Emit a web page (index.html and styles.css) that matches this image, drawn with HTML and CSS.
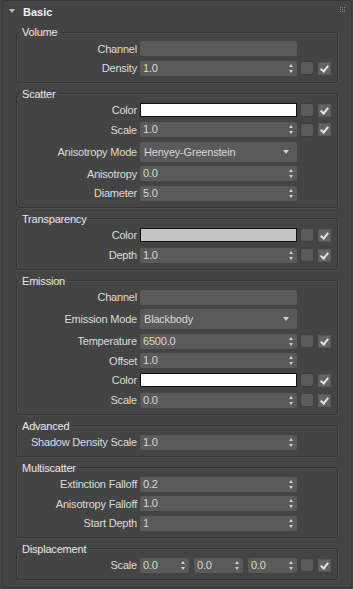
FILE: index.html
```html
<!DOCTYPE html>
<html lang="en">

<head>
    <meta charset="UTF-8">
    <meta name="viewport" content="width=device-width, initial-scale=1.0">
    <title>Basic</title>
    <link rel="stylesheet" href="styles.css">
</head>

<body>
    <div class="rollout">
        <div class="rollout-head">
            <span class="tri"></span>
            <span class="title">Basic</span>
            <svg class="grip" width="6" height="6" viewBox="0 0 6 6">
                <rect x="0" y="0" width="1" height="1" /><rect x="2" y="0" width="1" height="1" /><rect x="4" y="0" width="1" height="1" />
                <rect x="0" y="2" width="1" height="1" /><rect x="2" y="2" width="1" height="1" /><rect x="4" y="2" width="1" height="1" />
                <rect x="0" y="4" width="1" height="1" /><rect x="2" y="4" width="1" height="1" /><rect x="4" y="4" width="1" height="1" />
            </svg>
        </div>

        <div class="rollout-body">
            <fieldset class="group">
                <legend>Volume</legend>
                <div class="row"><label>Channel</label><div class="field"></div></div>
                <div class="row"><label>Density</label><div class="field spin">1.0</div><span class="map"></span><span class="check"></span></div>
            </fieldset>

            <fieldset class="group">
                <legend>Scatter</legend>
                <div class="row"><label>Color</label><div class="swatch white"></div><span class="map"></span><span class="check"></span></div>
                <div class="row"><label>Scale</label><div class="field spin">1.0</div><span class="map"></span><span class="check"></span></div>
                <div class="row tall"><label>Anisotropy Mode</label><div class="field drop">Henyey-Greenstein</div></div>
                <div class="row"><label>Anisotropy</label><div class="field spin">0.0</div></div>
                <div class="row"><label>Diameter</label><div class="field spin">5.0</div></div>
            </fieldset>

            <fieldset class="group">
                <legend>Transparency</legend>
                <div class="row"><label>Color</label><div class="swatch grey"></div><span class="map"></span><span class="check"></span></div>
                <div class="row"><label>Depth</label><div class="field spin">1.0</div><span class="map"></span><span class="check"></span></div>
            </fieldset>

            <fieldset class="group">
                <legend>Emission</legend>
                <div class="row"><label>Channel</label><div class="field"></div></div>
                <div class="row tall"><label>Emission Mode</label><div class="field drop">Blackbody</div></div>
                <div class="row"><label>Temperature</label><div class="field spin">6500.0</div><span class="map"></span><span class="check"></span></div>
                <div class="row"><label>Offset</label><div class="field spin">1.0</div></div>
                <div class="row"><label>Color</label><div class="swatch white"></div><span class="map"></span><span class="check"></span></div>
                <div class="row"><label>Scale</label><div class="field spin">0.0</div><span class="map"></span><span class="check"></span></div>
            </fieldset>

            <fieldset class="group">
                <legend>Advanced</legend>
                <div class="row"><label>Shadow Density Scale</label><div class="field spin">1.0</div></div>
            </fieldset>

            <fieldset class="group">
                <legend>Multiscatter</legend>
                <div class="row"><label>Extinction Falloff</label><div class="field spin">0.2</div></div>
                <div class="row"><label>Anisotropy Falloff</label><div class="field spin">1.0</div></div>
                <div class="row"><label>Start Depth</label><div class="field spin">1</div></div>
            </fieldset>

            <fieldset class="group">
                <legend>Displacement</legend>
                <div class="row">
                    <label>Scale</label>
                    <div class="triple">
                        <div class="field spin">0.0</div>
                        <div class="field spin">0.0</div>
                        <div class="field spin">0.0</div>
                    </div>
                    <span class="map"></span><span class="check"></span>
                </div>
            </fieldset>
        </div>
    </div>
</body>

</html>
```

FILE: styles.css
```css
* {
    margin: 0;
    padding: 0;
    box-sizing: border-box;
    font-family: 'Liberation Sans', Arial, sans-serif;
}

body {
    background: #444444;
    color: #dcdcdc;
    font-size: 11px;
    letter-spacing: -0.2px;
}

.rollout {
    margin: 0 1px 0 2px;
    height: 588px;
    border: 1px solid #363636;
    border-radius: 3px;
    background: #444444;
}

/* Header */

.rollout-head {
    height: 21px;
    display: flex;
    align-items: center;
    padding-left: 6px;
}

.tri {
    width: 0;
    height: 0;
    border-left: 3px solid transparent;
    border-right: 3px solid transparent;
    border-top: 4px solid #bdbdbd;
    margin-right: 8px;
    margin-top: -2px;
}

.title {
    font-weight: bold;
    color: #f0f0f0;
    letter-spacing: 0;
    flex: 1;
}

.grip {
    fill: #8a8a8a;
    margin-right: 5px;
    margin-top: -4px;
}

/* Groups */

.rollout-body {
    padding: 3px 0 0;
}

.group {
    margin: 0 13px 4px 13px;
    border: 1px solid #333333;
    border-radius: 3px;
    box-shadow: inset 1px 1px 0 #4d4d4d, 1px 1px 0 #4d4d4d;
    padding: 2px 0 6px;
    display: flex;
    flex-direction: column;
    gap: 4.6px;
}

.group legend {
    margin-left: 2px;
    padding: 0 3px;
    line-height: 14px;
    color: #e8e8e8;
}

.row {
    display: flex;
    align-items: center;
    height: 15px;
}

.row.tall {
    height: 20px;
}

.row label {
    width: 120px;
    text-align: right;
    margin-right: 3px;
    white-space: nowrap;
}

.field {
    width: 157px;
    height: 15px;
    background: #5a5a5a;
    border-radius: 2px;
    padding-left: 3px;
    line-height: 15px;
    color: #d8d8d8;
    position: relative;
}

.row.tall .field {
    height: 20px;
    line-height: 20px;
    padding-left: 4px;
}

/* spinner arrows */
.spin::before,
.spin::after {
    content: '';
    position: absolute;
    right: 4px;
    width: 0;
    height: 0;
    border-left: 2.5px solid transparent;
    border-right: 2.5px solid transparent;
}

.spin::before {
    top: 3px;
    border-bottom: 3px solid #d0d0d0;
}

.spin::after {
    bottom: 3px;
    border-top: 3px solid #d0d0d0;
}

/* dropdown arrow */
.drop::after {
    content: '';
    position: absolute;
    right: 8px;
    top: 8px;
    width: 0;
    height: 0;
    border-left: 3.5px solid transparent;
    border-right: 3.5px solid transparent;
    border-top: 4px solid #d0d0d0;
}

.swatch {
    width: 157px;
    height: 14px;
    border: 1px solid #111111;
}

.swatch.white {
    background: #ffffff;
}

.swatch.grey {
    background: #c3c3c3;
}

.map {
    width: 14px;
    height: 14px;
    margin-left: 3px;
    background: #5b5b5b;
    border: 1px solid #3f3f3f;
    border-radius: 3px;
}

.check {
    width: 13px;
    height: 13px;
    margin-left: 4px;
    background: #646464;
    border: 1px solid #585858;
    position: relative;
}

.check::after {
    content: '';
    position: absolute;
    left: 3px;
    top: 1px;
    width: 3px;
    height: 6px;
    border-right: 2px solid #e6e6e6;
    border-bottom: 2px solid #e6e6e6;
    transform: rotate(40deg);
}

.triple {
    width: 157px;
    display: flex;
    gap: 5px;
}

.triple .field {
    flex: 1;
    width: auto;
}
```
